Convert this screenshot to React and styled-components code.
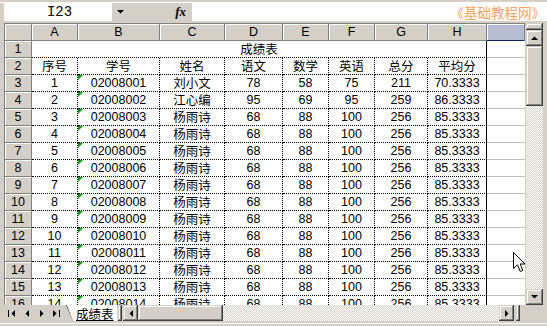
import React from 'react';
import styled, { createGlobalStyle, css } from 'styled-components';

const GlobalStyle = createGlobalStyle`
  html, body {
    margin: 0;
    padding: 0;
    background: #d4d0c8;
  }
  body {
    font-family: "Liberation Sans", "Noto Sans CJK SC", sans-serif;
  }
`;

const raised = css`
  box-shadow: inset -1px -1px #404040, inset 1px 1px #d4d0c8, inset -2px -2px #808080, inset 2px 2px #ffffff;
`;

const checker = css`
  background-color: #ffffff;
  background-image: repeating-conic-gradient(#d4d0c8 0 25%, #ffffff 0 50%);
  background-size: 2px 2px;
`;

const cjkText = css`
  font-family: "Noto Sans CJK SC", sans-serif;
  line-height: 15px;
  padding-bottom: 1px;
`;

const Window = styled.div`
  position: relative;
  width: 547px;
  height: 326px;
  overflow: hidden;
  background: #d4d0c8;
  display: flex;
  flex-direction: column;
  font-size: 12.5px;
  color: #000;
`;

const TopStrip = styled.div`
  height: 3px;
  border-bottom: 1px solid #ffffff;
  box-sizing: border-box;
`;

const FormulaRow = styled.div`
  height: 18px;
  display: flex;
  padding-left: 4px;
  margin-bottom: 2px;
`;

const NameBox = styled.div`
  width: 108px;
  background: #fff;
  display: flex;
  align-items: center;
  justify-content: center;
  padding-left: 3px;
  box-sizing: border-box;
  font-family: "Liberation Mono", monospace;
  font-size: 14px;
`;

const NameDrop = styled.div`
  width: 17px;
  display: flex;
  align-items: center;
  justify-content: center;
`;

const FxBox = styled.div`
  width: 63px;
  display: flex;
  align-items: center;
  justify-content: flex-end;
  padding-right: 6px;
  box-sizing: border-box;
  font-family: "Liberation Serif", serif;
  font-style: italic;
  font-weight: bold;
  font-size: 13px;
`;

const FormulaInput = styled.div`
  flex: 1;
  background: #fff;
  display: flex;
  align-items: center;
  justify-content: flex-end;
  padding-right: 2px;
  color: #f9a35f;
  font-family: "Noto Sans CJK SC", sans-serif;
  font-size: 13.5px;
  line-height: 16px;
`;

const Main = styled.div`
  display: flex;
  padding-left: 4px;
  height: 282px;
`;

const Sheet = styled.div`
  display: grid;
  grid-template-columns: 27px 46px 82px 65px 58px 46px 46px 53px 59px 38px;
  grid-auto-rows: 17px;
  width: 521px;
  height: 282px;
  overflow: hidden;
  border-top: 1px solid #808080;
  border-left: 1px solid #808080;
  box-sizing: border-box;
  background: #fff;
`;

const Head = styled.div`
  background: ${p => (p.$selected ? '#b6bdd2' : '#d4d0c8')};
  border-right: 1px solid #808080;
  border-bottom: 1px solid ${p => (p.$selected ? '#0a246a' : '#808080')};
  box-shadow: inset 1px 1px #ffffff;
  box-sizing: border-box;
  display: flex;
  align-items: center;
  justify-content: center;
  font-size: 12.5px;
`;

const Cell = styled.div`
  position: relative;
  box-sizing: border-box;
  display: flex;
  align-items: center;
  justify-content: center;
  white-space: nowrap;
  border-bottom: 1px dotted #000;
  border-right: ${p => (p.$edge ? '1px solid #000' : '1px dotted #000')};
  ${p => p.$span && css`grid-column: span ${p.$span};`}
  ${p => p.$cjk && cjkText}
  ${p =>
    p.$flag &&
    css`
      &::before {
        content: '';
        position: absolute;
        top: 0;
        left: 0;
        border-top: 5px solid #00a000;
        border-right: 5px solid transparent;
      }
    `}
`;

const EmptyCell = styled.div`
  border-bottom: 1px solid #c0c0c0;
  box-sizing: border-box;
`;

const VScroll = styled.div`
  width: 17px;
  margin-left: 1px;
  display: flex;
  flex-direction: column;
`;

const SplitBox = styled.div`
  height: 7px;
  ${raised}
`;

const ScrollBtn = styled.div`
  width: ${p => p.$w || 17}px;
  height: ${p => p.$h || 16}px;
  flex-shrink: 0;
  display: flex;
  align-items: center;
  justify-content: center;
  background: #d4d0c8;
  ${raised}
`;

const Thumb = styled.div`
  flex-shrink: 0;
  background: #d4d0c8;
  ${p => (p.$vertical ? css`height: 60px;` : css`width: 85px;`)}
  ${raised}
`;

const Track = styled.div`
  flex: 1;
  ${checker}
`;

const BottomBar = styled.div`
  display: flex;
  height: 16px;
  padding-left: 4px;
`;

const NavGroup = styled.div`
  display: flex;
  width: 62px;
`;

const NavBtn = styled.div`
  width: 15px;
  display: flex;
  align-items: center;
  justify-content: center;
`;

const Tab = styled.div`
  position: relative;
  width: 51px;
  display: flex;
  align-items: center;
  padding-left: 10px;
  box-sizing: border-box;
  background: #fff;
  clip-path: polygon(0 0, 100% 0, 100% 100%, 7px 100%);
  font-size: 12.5px;
  text-decoration: underline;
  ${cjkText}
  padding-bottom: 0;
  &::before {
    content: '';
    position: absolute;
    left: 3px;
    top: -1px;
    width: 1px;
    height: 19px;
    background: #000;
    transform: rotate(-21deg);
  }
`;

const TabSplit = styled.div`
  width: 4px;
  margin: 0 1px 0 1px;
  ${raised}
`;

const HScroll = styled.div`
  display: flex;
  width: 397px;
`;

const HTail = styled.div`
  width: 4px;
  margin-left: 2px;
  ${raised}
`;

const StatusArea = styled.div`
  flex: 1;
  border-top: 1px solid #ffffff;
  margin-top: 2px;
`;

const Tri = ({ dir, bar }) => {
  const paths = {
    up: 'M0 4 L3.5 0.5 L7 4 Z',
    down: 'M0 0 L3.5 3.5 L7 0 Z',
    left: 'M4 0 L0.5 3.5 L4 7 Z',
    right: 'M0 0 L3.5 3.5 L0 7 Z',
  };
  const vertical = dir === 'up' || dir === 'down';
  const w = vertical ? 7 : bar ? 7 : 4;
  const h = vertical ? 4 : 7;
  const dx = bar === 'before' ? 3 : 0;
  return (
    <svg width={w} height={h} viewBox={`0 0 ${w} ${h}`}>
      {bar === 'before' && <rect x="0" y="0" width="1" height="7" fill="#000" />}
      <g transform={`translate(${dx} 0)`}>
        <path d={paths[dir]} fill="#000" />
      </g>
      {bar === 'after' && <rect x="6" y="0" width="1" height="7" fill="#000" />}
    </svg>
  );
};

const Cursor = styled.svg`
  position: absolute;
  left: 513px;
  top: 252px;
`;

const columns = ['A', 'B', 'C', 'D', 'E', 'F', 'G', 'H'];
const headers = ['序号', '学号', '姓名', '语文', '数学', '英语', '总分', '平均分'];

const data = [
  [1, '02008001', '刘小文', 78, 58, 75, 211, '70.3333'],
  [2, '02008002', '江心编', 95, 69, 95, 259, '86.3333'],
];
for (let i = 3; i <= 14; i++) {
  data.push([i, '020080' + String(i).padStart(2, '0'), '杨雨诗', 68, 88, 100, 256, '85.3333']);
}

export default function App() {
  return (
    <Window>
      <GlobalStyle />
      <TopStrip />
      <FormulaRow>
        <NameBox>I23</NameBox>
        <NameDrop>
          <Tri dir="down" />
        </NameDrop>
        <FxBox>fx</FxBox>
        <FormulaInput>《基础教程网》</FormulaInput>
      </FormulaRow>

      <Main>
        <Sheet>
          <Head />
          {columns.map(c => (
            <Head key={c}>{c}</Head>
          ))}
          <Head $selected />

          <Head>1</Head>
          <Cell $span={8} $edge $cjk>成绩表</Cell>
          <EmptyCell />

          <Head>2</Head>
          {headers.map((h, i) => (
            <Cell key={h} $edge={i === 7} $cjk>{h}</Cell>
          ))}
          <EmptyCell />

          {data.map((row, r) => (
            <React.Fragment key={r}>
              <Head>{r + 3}</Head>
              {row.map((v, i) => (
                <Cell key={i} $edge={i === 7} $flag={i === 1} $cjk={i === 2}>{v}</Cell>
              ))}
              <EmptyCell />
            </React.Fragment>
          ))}
        </Sheet>

        <VScroll>
          <SplitBox />
          <ScrollBtn>
            <Tri dir="up" />
          </ScrollBtn>
          <Thumb $vertical />
          <Track />
          <ScrollBtn>
            <Tri dir="down" />
          </ScrollBtn>
        </VScroll>
      </Main>

      <BottomBar>
        <NavGroup>
          <NavBtn><Tri dir="left" bar="before" /></NavBtn>
          <NavBtn><Tri dir="left" /></NavBtn>
          <NavBtn><Tri dir="right" /></NavBtn>
          <NavBtn><Tri dir="right" bar="after" /></NavBtn>
        </NavGroup>
        <Tab>成绩表</Tab>
        <TabSplit />
        <HScroll>
          <ScrollBtn $w={15}>
            <Tri dir="left" />
          </ScrollBtn>
          <Thumb />
          <Track />
          <ScrollBtn $w={15}>
            <Tri dir="right" />
          </ScrollBtn>
          <HTail />
        </HScroll>
      </BottomBar>
      <StatusArea />

      <Cursor width="13" height="21" viewBox="0 0 13 21">
        <path
          d="M0.5 0.5 L0.5 16.5 L4.5 12.8 L7.2 19.5 L9.8 18.4 L7.2 12 L12 12 Z"
          fill="#fff"
          stroke="#000"
          strokeWidth="1"
        />
      </Cursor>
    </Window>
  );
}
